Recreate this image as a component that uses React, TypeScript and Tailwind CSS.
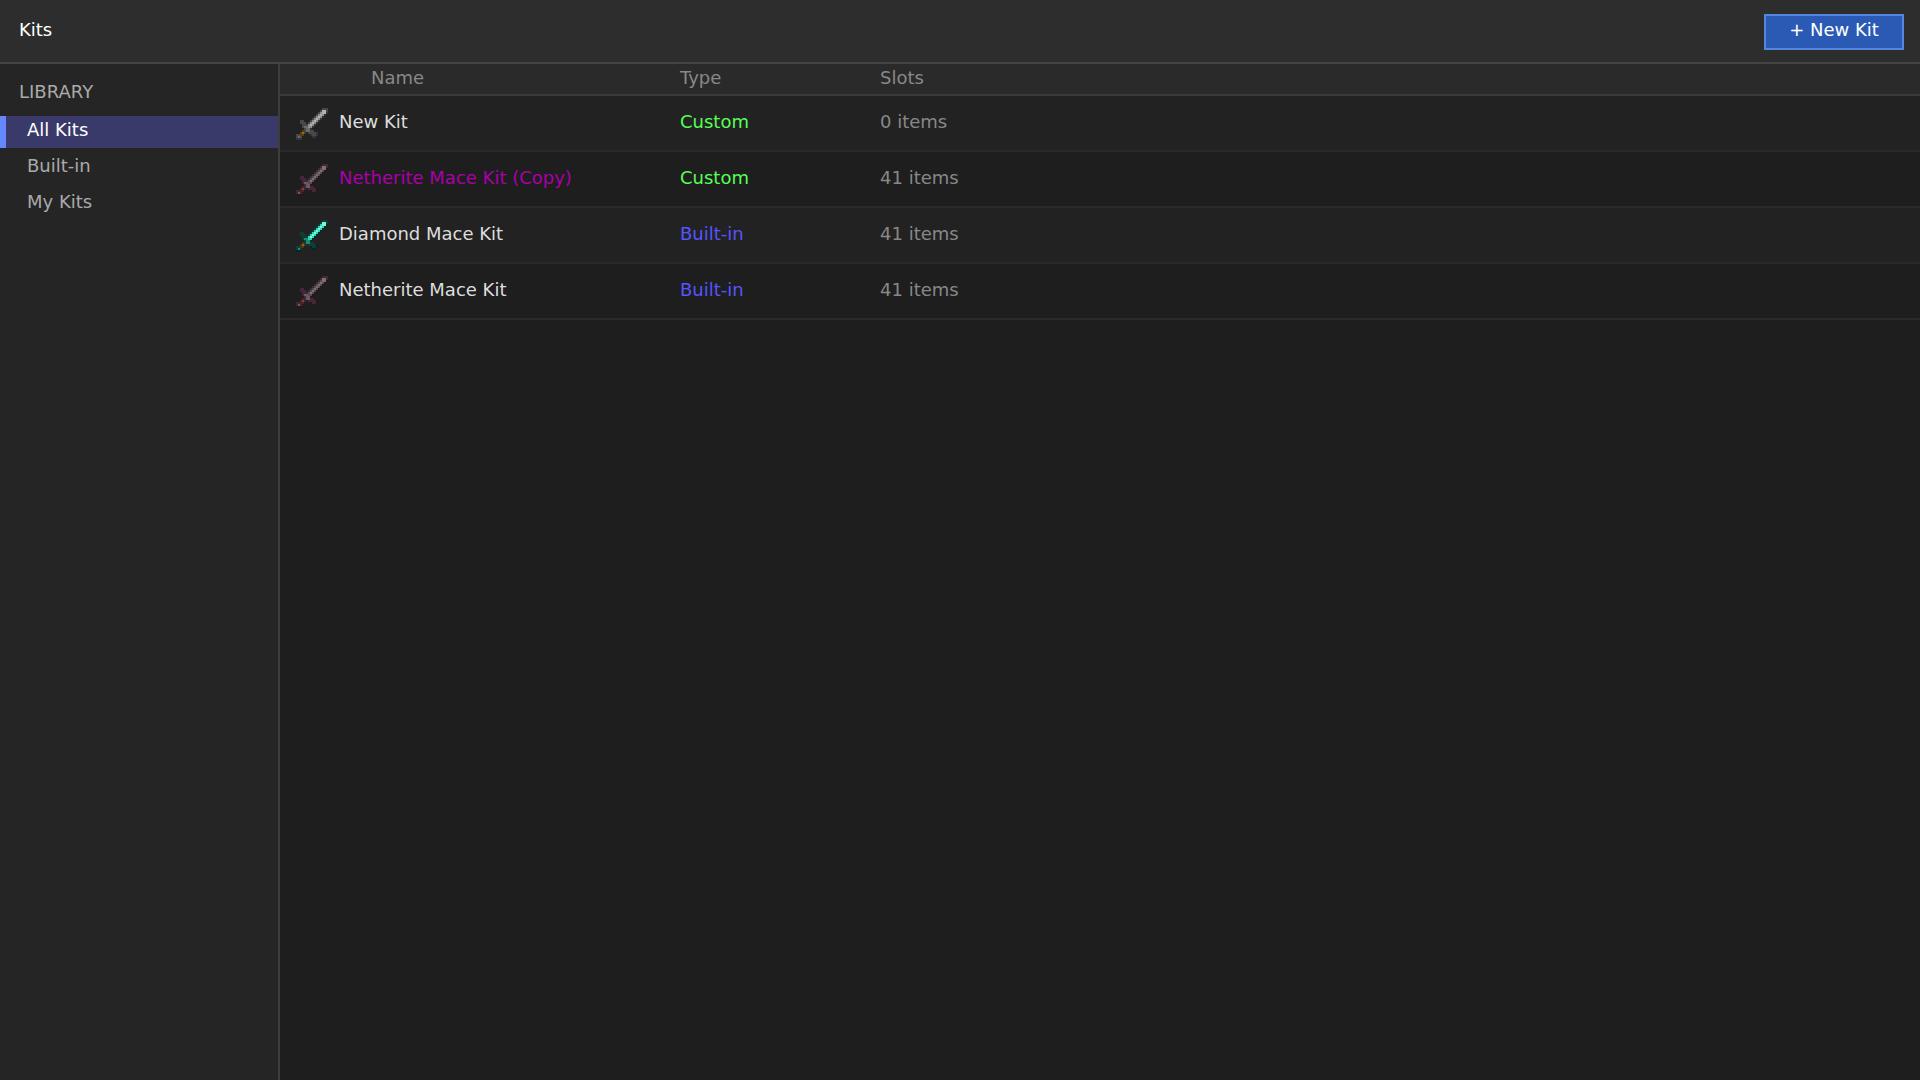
import clsx from "clsx";

type SwordKind = "iron" | "diamond" | "netherite";

type Kit = {
  name: string;
  nameClassName: string;
  type: "Custom" | "Built-in";
  slots: string;
  icon: SwordKind;
};

const KITS: Kit[] = [
  { name: "New Kit", nameClassName: "text-[#dddddd]", type: "Custom", slots: "0 items", icon: "iron" },
  {
    name: "Netherite Mace Kit (Copy)",
    nameClassName: "text-[#aa00aa]",
    type: "Custom",
    slots: "41 items",
    icon: "netherite",
  },
  { name: "Diamond Mace Kit", nameClassName: "text-[#dddddd]", type: "Built-in", slots: "41 items", icon: "diamond" },
  { name: "Netherite Mace Kit", nameClassName: "text-[#dddddd]", type: "Built-in", slots: "41 items", icon: "netherite" },
];

const LIBRARY = ["All Kits", "Built-in", "My Kits"];

// 16x16 sprite, one character per pixel, "." is transparent
const SWORD = [
  ".............ooo",
  "............ollo",
  "...........owlld",
  "..........owlwd.",
  ".........owlwd..",
  "........owlwd...",
  "..oo...owlwd....",
  "..ooo.owlwd.....",
  "...ooowlwd......",
  "...oggwwd.......",
  "....oggd........",
  "...hoggoo.......",
  "..hHh.ooood.....",
  "oohh...dood.....",
  "ogo.....dd......",
  "ddd.............",
];

const PALETTES: Record<SwordKind, Record<string, string>> = {
  iron: { o: "#484848", d: "#353535", w: "#8e8c88", l: "#b4b2ae", g: "#6b6b6b", h: "#5a3d12", H: "#95681f" },
  diamond: { o: "#0e3f36", d: "#08251f", w: "#2bd3b6", l: "#7df5dd", g: "#1c8a74", h: "#4c3510", H: "#896727" },
  netherite: { o: "#45273c", d: "#2a1518", w: "#554b52", l: "#7a7078", g: "#6b5a66", h: "#4a2522", H: "#7e4238" },
};

function SwordIcon({ kind }: { kind: SwordKind }) {
  const palette = PALETTES[kind];
  return (
    <svg viewBox="0 0 16 16" className="size-8 shrink-0" shapeRendering="crispEdges" aria-hidden>
      {SWORD.flatMap((row, y) =>
        [...row].map((cell, x) =>
          cell === "." ? null : <rect key={`${x}-${y}`} x={x} y={y} width={1} height={1} fill={palette[cell]} />
        )
      )}
    </svg>
  );
}

function Sidebar() {
  return (
    <aside className="w-[280px] shrink-0 border-r-2 border-[#3d3d3d] bg-[#252525] pt-[18px]">
      <h2 className="px-[19px] pb-[14px] text-[#aaaaaa]">LIBRARY</h2>
      <nav className="flex flex-col gap-1">
        {LIBRARY.map((label, idx) => (
          <button
            key={label}
            type="button"
            className={clsx(
              "h-8 border-l-6 pb-1 pl-[21px] text-left",
              idx === 0 ? "border-[#6688ff] bg-[#3a3a6a] text-white" : "border-transparent text-[#aaaaaa]"
            )}
          >
            {label}
          </button>
        ))}
      </nav>
    </aside>
  );
}

function KitTable() {
  return (
    <table className="w-full table-fixed border-collapse text-left">
      <colgroup>
        <col className="w-[400px]" />
        <col className="w-[200px]" />
        <col />
      </colgroup>
      <thead>
        <tr className="h-8 bg-[#2a2a2a] text-[#888888] shadow-[inset_0_-2px_#3a3a3a]">
          <th scope="col" className="pb-1 pl-[91px] font-normal">Name</th>
          <th scope="col" className="pb-1 font-normal">Type</th>
          <th scope="col" className="pb-1 font-normal">Slots</th>
        </tr>
      </thead>
      <tbody>
        {KITS.map((kit) => (
          <tr key={kit.name} className="h-14 align-top shadow-[inset_0_-2px_#2a2a2a] odd:bg-[#222222] even:bg-[#1e1e1e]">
            <td className="pt-3 pl-4">
              <div className="flex gap-[11px]">
                <SwordIcon kind={kit.icon} />
                <span className={clsx("pt-1", kit.nameClassName)}>{kit.name}</span>
              </div>
            </td>
            <td className={clsx("pt-4", kit.type === "Custom" ? "text-[#55ff55]" : "text-[#5555ff]")}>{kit.type}</td>
            <td className="pt-4 text-[#888888]">{kit.slots}</td>
          </tr>
        ))}
      </tbody>
    </table>
  );
}

export default function App() {
  return (
    <div className="flex min-h-screen flex-col bg-[#1e1e1e] font-['DejaVu_Sans',sans-serif] text-lg leading-5">
      <header className="flex h-16 items-center justify-between border-b-2 border-[#444444] bg-[#2d2d2d] pt-0.5 pr-4 pl-[19px]">
        <h1 className="pb-1 text-white">Kits</h1>
        <button type="button" className="h-9 w-[140px] border-2 border-[#5588dd] bg-[#2a5ab4] pb-1 text-white">
          + New Kit
        </button>
      </header>
      <div className="flex flex-1">
        <Sidebar />
        <main className="min-w-0 flex-1">
          <KitTable />
        </main>
      </div>
    </div>
  );
}
